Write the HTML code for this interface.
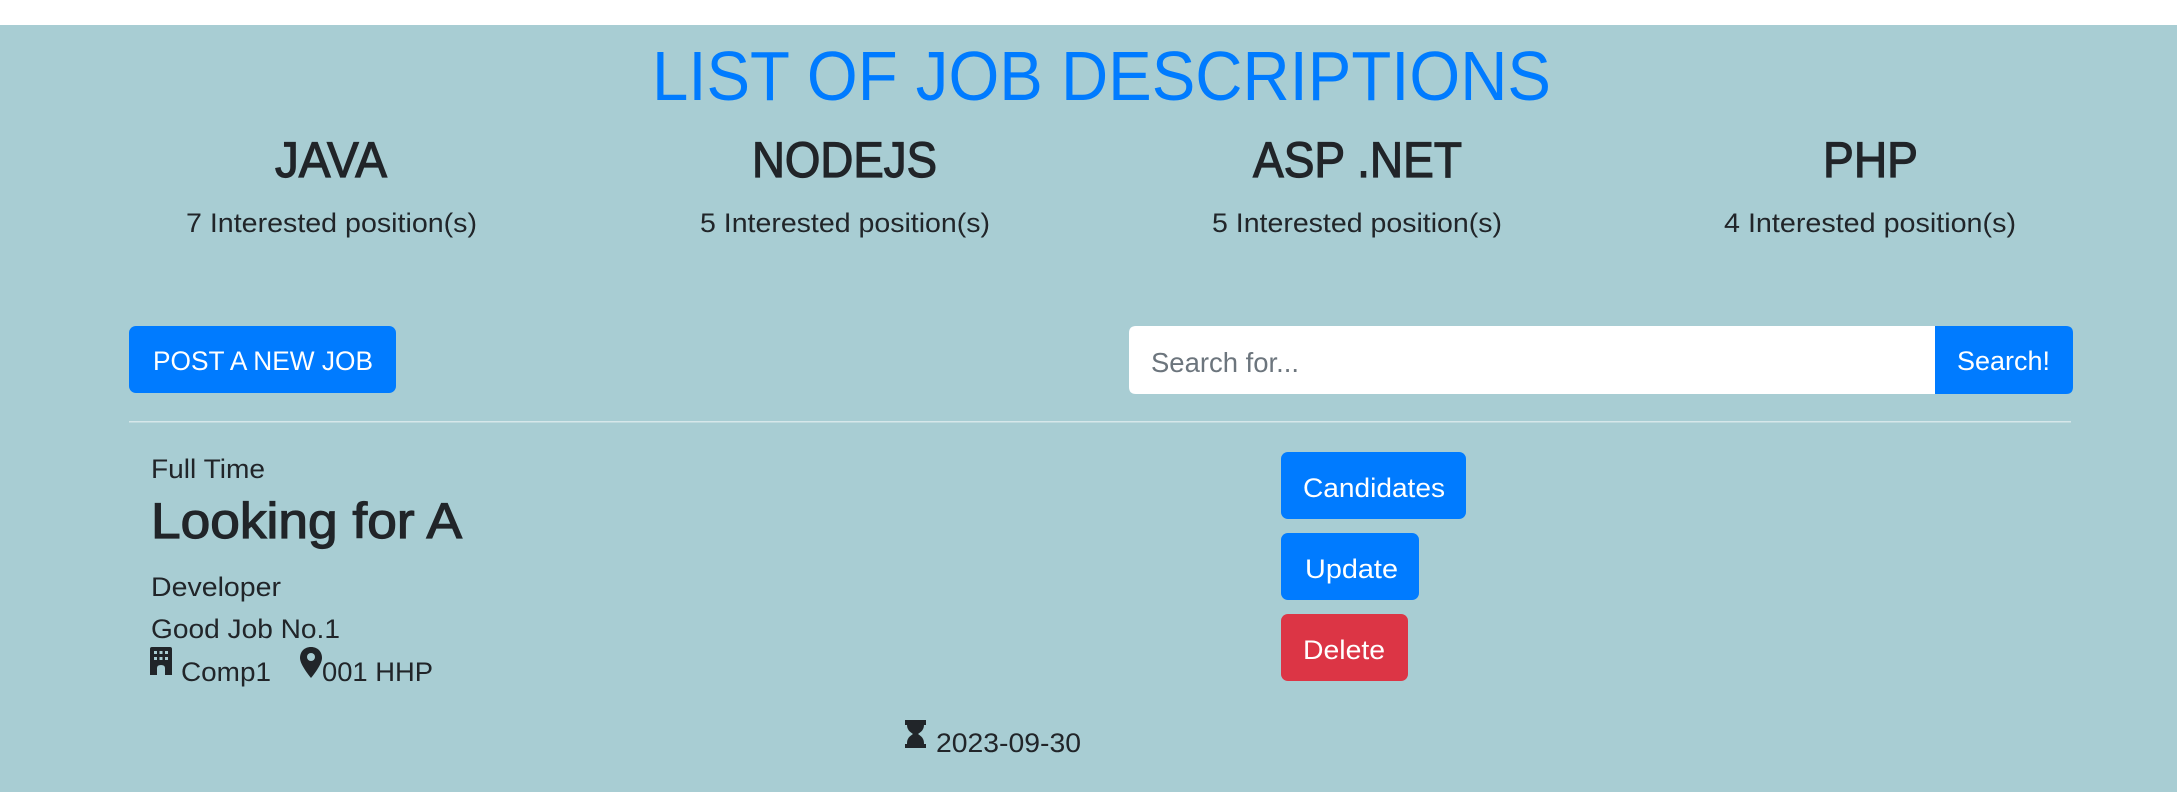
<!DOCTYPE html>
<html><head><meta charset="utf-8"><style>
html,body{margin:0;padding:0;background:#fff;}
svg{display:block;}
text{font-family:"Liberation Sans",sans-serif;}
</style></head><body>
<svg width="2177" height="792" viewBox="0 0 2177 792" xmlns="http://www.w3.org/2000/svg">
<rect x="0" y="0" width="2177" height="25" fill="#fff"/>
<rect x="0" y="25" width="2177" height="767" fill="#a8cdd3"/>
<text x="652" y="100" font-size="70" fill="#007bff" textLength="899" lengthAdjust="spacingAndGlyphs">LIST OF JOB DESCRIPTIONS</text>
<g fill="#212529" stroke="#212529" stroke-width="1.2" font-size="50">
<text x="275" y="177" textLength="112" lengthAdjust="spacingAndGlyphs">JAVA</text>
<text x="752" y="177" textLength="185" lengthAdjust="spacingAndGlyphs">NODEJS</text>
<text x="1253" y="177" textLength="209" lengthAdjust="spacingAndGlyphs">ASP .NET</text>
<text x="1823" y="177" textLength="95" lengthAdjust="spacingAndGlyphs">PHP</text>
</g>
<g fill="#212529" font-size="27">
<text x="186" y="232" textLength="291" lengthAdjust="spacingAndGlyphs">7 Interested position(s)</text>
<text x="700" y="232" textLength="290" lengthAdjust="spacingAndGlyphs">5 Interested position(s)</text>
<text x="1212" y="232" textLength="290" lengthAdjust="spacingAndGlyphs">5 Interested position(s)</text>
<text x="1724" y="232" textLength="292" lengthAdjust="spacingAndGlyphs">4 Interested position(s)</text>
</g>
<rect x="129" y="326" width="267" height="67" rx="7" fill="#007bff"/>
<text x="153" y="370" font-size="27" fill="#fff" textLength="220" lengthAdjust="spacingAndGlyphs">POST A NEW JOB</text>
<path d="M1136 326 H1937 V394 H1136 Q1129 394 1129 387 V333 Q1129 326 1136 326 Z" fill="#fff"/>
<text x="1151" y="372" font-size="28" fill="#6c757d" textLength="148" lengthAdjust="spacingAndGlyphs">Search for...</text>
<path d="M1935 326 H2066 Q2073 326 2073 333 V387 Q2073 394 2066 394 H1935 Z" fill="#007bff"/>
<text x="1957" y="370" font-size="27" fill="#fff" textLength="93" lengthAdjust="spacingAndGlyphs">Search!</text>
<rect x="129" y="421" width="1942" height="1.5" fill="#d6e7ea"/>
<g fill="#212529">
<text x="151" y="478" font-size="27" textLength="114" lengthAdjust="spacingAndGlyphs">Full Time</text>
<text x="151" y="538" font-size="50" stroke="#212529" stroke-width="1.2" textLength="311" lengthAdjust="spacingAndGlyphs">Looking for A</text>
<text x="151" y="596" font-size="27" textLength="130" lengthAdjust="spacingAndGlyphs">Developer</text>
<text x="151" y="638" font-size="27" textLength="189" lengthAdjust="spacingAndGlyphs">Good Job No.1</text>
<text x="181" y="681" font-size="27" textLength="90" lengthAdjust="spacingAndGlyphs">Comp1</text>
<text x="322" y="681" font-size="27" textLength="111" lengthAdjust="spacingAndGlyphs">001 HHP</text>
<text x="936" y="752" font-size="27" textLength="145" lengthAdjust="spacingAndGlyphs">2023-09-30</text>
</g>
<path d="M152 647 H170 Q172 647 172 649 V675 H165 V668 Q165 665 161 665 Q157 665 157 668 V675 H150 V649 Q150 647 152 647 Z" fill="#212529"/>
<g fill="#a8cdd3"><rect x="154" y="651" width="3" height="3"/><rect x="159.5" y="651" width="3" height="3"/><rect x="165" y="651" width="3" height="3"/><rect x="154" y="657" width="3" height="3"/><rect x="159.5" y="657" width="3" height="3"/><rect x="165" y="657" width="3" height="3"/></g>
<path d="M311 647 C304 647 300 652 300 658 C300 665 311 678 311 678 C311 678 322 665 322 658 C322 652 318 647 311 647 Z" fill="#212529"/>
<circle cx="311" cy="657" r="4" fill="#a8cdd3"/>
<path d="M905 720 H926 V725 H924 C924 731 919 733 918 734 C919 735 924 737 924 743 V744 H926 V748 H905 V744 H907 V743 C907 737 912 735 913 734 C912 733 907 731 907 725 H905 Z" fill="#212529"/>
<rect x="1281" y="452" width="185" height="67" rx="7" fill="#007bff"/>
<text x="1303" y="497" font-size="27" fill="#fff" textLength="142" lengthAdjust="spacingAndGlyphs">Candidates</text>
<rect x="1281" y="533" width="138" height="67" rx="7" fill="#007bff"/>
<text x="1305" y="578" font-size="27" fill="#fff" textLength="93" lengthAdjust="spacingAndGlyphs">Update</text>
<rect x="1281" y="614" width="127" height="67" rx="7" fill="#dc3545"/>
<text x="1303" y="659" font-size="27" fill="#fff" textLength="82" lengthAdjust="spacingAndGlyphs">Delete</text>
</svg>
</body></html>
